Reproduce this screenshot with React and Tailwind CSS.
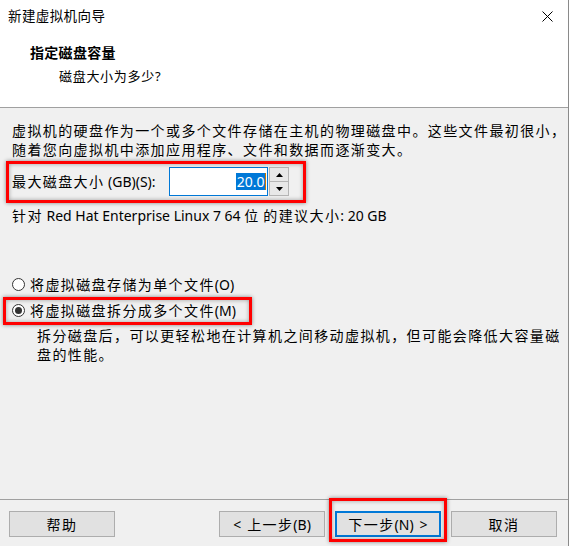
import React from "react";

const CJK = /([\u3000-\u303f\u3400-\u9fff\uff00-\uffef]+)/;
function T({ children, cls = "tracking-[1.4px]" }) {
  return children.split(CJK).map((s, i) =>
    i % 2 ? (
      <span key={i} className={cls}>
        {s}
      </span>
    ) : (
      <React.Fragment key={i}>{s}</React.Fragment>
    )
  );
}

function Radio({ checked }) {
  return (
    <span className="w-[13px] h-[13px] rounded-full border border-[#333333] bg-white flex items-center justify-center shrink-0">
      {checked && <span className="w-[7px] h-[7px] rounded-full bg-[#333333]" />}
    </span>
  );
}

function Btn({ children, primary }) {
  return (
    <div
      className={
        "h-[26px] w-[106px] flex items-center justify-center bg-[#e1e1e1] text-[14px] " +
        (primary ? "border-2 border-[#0078d7]" : "border border-[#adadad]")
      }
    >
      {children}
    </div>
  );
}

const redBox =
  "absolute border-[3px] border-[#ff0000] shadow-[0_0_4px_rgba(0,0,0,0.45),inset_0_0_4px_rgba(0,0,0,0.35)] pointer-events-none";

export default function App() {
  return (
    <div className="relative w-[569px] h-[546px] flex flex-col bg-[#f0f0f0] border-r border-[#8a8a8a] text-black font-['Noto_Sans','Noto_Sans_CJK_SC',sans-serif] overflow-hidden">
      {/* header */}
      <div className="bg-white h-[107px] flex flex-col">
        <div className="h-[32px] flex items-center justify-between pl-[8px] pr-[15px]">
          <span className="text-[13.5px] leading-[20px] tracking-[0.4px]">新建虚拟机向导</span>
          <svg width="11" height="11" viewBox="0 0 11 11" className="mt-[1px]">
            <path d="M0.5 0.5 L10.5 10.5 M10.5 0.5 L0.5 10.5" stroke="#000" strokeWidth="1" />
          </svg>
        </div>
        <div className="mt-[11px] pl-[30px] text-[14px] leading-[20px] font-bold tracking-[0.3px]">
          指定磁盘容量
        </div>
        <div className="mt-[3px] pl-[59px] text-[13px] leading-[20px] tracking-[0.7px]">
          磁盘大小为多少?
        </div>
      </div>
      <div className="h-px bg-[#a0a0a0]" />

      {/* body */}
      <div className="flex-1 flex flex-col text-[14px] leading-[19px]">
        <div className="pt-[13px] pl-[12px]">
          <T>虚拟机的硬盘作为一个或多个文件存储在主机的物理磁盘中。这些文件最初很小，</T>
          <br />
          <T>随着您向虚拟机中添加应用程序、文件和数据而逐渐变大。</T>
        </div>

        <div className="mt-[8px] h-[29px] flex items-center pl-[12px]">
          <span className="w-[157px]">
            <T>最大磁盘大小 (GB)(S):</T>
          </span>
          <div className="w-[99px] h-[29px] bg-white border border-[#0078d7] flex items-center justify-end pr-[1px]">
            <span className="bg-[#0078d7] text-white h-[17px] leading-[17px] px-[0.5px]">20.0</span>
            <span className="w-px h-[17px] bg-[#c87800]" />
          </div>
          <div className="ml-[1px] w-[20px] h-[29px] border border-[#b5b5b5] flex flex-col bg-[#f0f0f0]">
            <div className="flex-1 flex items-center justify-center border-b border-[#b5b5b5] bg-[#e8e8e8]">
              <svg width="7" height="4" viewBox="0 0 7 4">
                <path d="M3.5 0 L7 4 L0 4 Z" fill="#000" />
              </svg>
            </div>
            <div className="flex-1 flex items-center justify-center bg-[#e8e8e8]">
              <svg width="7" height="4" viewBox="0 0 7 4">
                <path d="M0 0 L7 0 L3.5 4 Z" fill="#000" />
              </svg>
            </div>
          </div>
        </div>

        <div className="mt-[10px] pl-[12px]">
          <T>针对 Red Hat Enterprise Linux 7 64 位 的建议大小: 20 GB</T>
        </div>

        <div className="mt-[50px] pl-[12px] flex items-center gap-[5px]">
          <Radio />
          <span>
            <T>将虚拟磁盘存储为单个文件(O)</T>
          </span>
        </div>
        <div className="mt-[7px] pl-[12px] flex items-center gap-[5px]">
          <Radio checked />
          <span>
            <T>将虚拟磁盘拆分成多个文件(M)</T>
          </span>
        </div>
        <div className="mt-[6px] pl-[37px]">
          <T>拆分磁盘后，可以更轻松地在计算机之间移动虚拟机，但可能会降低大容量磁</T>
          <br />
          <T>盘的性能。</T>
        </div>
      </div>

      <div className="h-px bg-[#a0a0a0]" />
      {/* footer */}
      <div className="h-[46px] pt-[11px] pl-[9px] flex items-start">
        <Btn>
          <T>帮助</T>
        </Btn>
        <div className="ml-[104px] flex gap-[10px]">
          <Btn>
            <span className="mr-[6px]">{"<"}</span>
            <T>上一步(B)</T>
          </Btn>
          <Btn primary>
            <T>下一步(N)</T>
            <span className="ml-[6px]">{">"}</span>
          </Btn>
          <Btn>
            <T>取消</T>
          </Btn>
        </div>
      </div>

      {/* annotation boxes */}
      <div className={redBox + " left-[6px] top-[161px] w-[300px] h-[42px]"} />
      <div className={redBox + " left-[3px] top-[297px] w-[249px] h-[28px]"} />
      <div className={redBox + " left-[329px] top-[498px] w-[118px] h-[44px]"} />
    </div>
  );
}
